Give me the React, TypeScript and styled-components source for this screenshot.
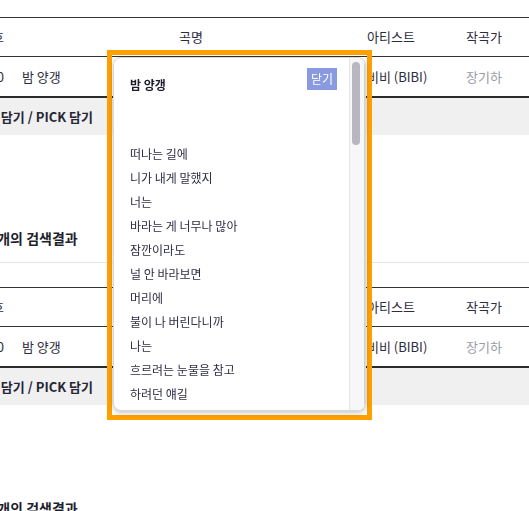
import * as React from 'react';
import styled, { createGlobalStyle } from 'styled-components';

const GlobalStyle = createGlobalStyle`
  html, body {
    margin: 0;
    padding: 0;
    background: #fff;
    overflow: hidden;
  }
  body {
    font-family: "Noto Sans CJK KR", "Noto Sans", sans-serif;
    color: #2c2c3e;
  }
`;

const Page = styled.main`
  width: 621px;
  margin: -43px 0 0 -60px;
`;

const Section = styled.section`
  margin-bottom: 92px;
`;

const Heading = styled.h2`
  margin: 0;
  padding: 0 0 13px 20px;
  font-size: 14px;
  font-weight: 700;
  line-height: 22px;
  color: #1f1f2e;
  border-bottom: 1px solid #e6e6e6;
`;

const Table = styled.div`
  margin-top: 24px;
  border-top: 1px solid #333;
`;

const Row = styled.div<{ $head?: boolean }>`
  display: grid;
  grid-template-columns: 72px 350px 99px 100px;
  align-items: center;
  height: ${(p) => (p.$head ? 38 : 39)}px;
  border-bottom: ${(p) => (p.$head ? '1px solid #333' : '2px solid #2b2b2b')};
  font-size: 13px;
  line-height: 20px;
`;

const NoCell = styled.div`
  text-align: right;
  padding-right: 8px;
  white-space: nowrap;
`;

const TitleCell = styled.div<{ $head?: boolean }>`
  text-align: ${(p) => (p.$head ? 'center' : 'left')};
  padding-left: ${(p) => (p.$head ? 8 : 10)}px;
  white-space: nowrap;
`;

const TextCell = styled.div<{ $muted?: boolean }>`
  padding-left: 5px;
  white-space: nowrap;
  color: ${(p) => (p.$muted ? '#9a9aa4' : 'inherit')};
`;

const ActionBar = styled.div`
  display: flex;
  align-items: center;
  height: 37px;
  padding-left: 34px;
  background: #f0f0f0;
  font-size: 13px;
  font-weight: 700;
  color: #262636;
  white-space: nowrap;
`;

// overlay ---------------------------------------------------------------

const Highlight = styled.div`
  position: fixed;
  left: 107px;
  top: 50px;
  width: 265px;
  height: 370px;
  box-sizing: border-box;
  border: 5px solid #ffa000;
  padding: 2px 1px 4px 1px;
`;

const Popup = styled.div`
  box-sizing: border-box;
  display: flex;
  width: 100%;
  height: 100%;
  background: #fff;
  border: 1px solid #d8d8d8;
  border-radius: 8px;
  box-shadow: 0 2px 5px rgba(0, 0, 0, 0.22);
  overflow: hidden;
`;

const Scroller = styled.div`
  flex: 1;
  min-width: 0;
  overflow: hidden;
`;

const ScrollTrack = styled.div`
  box-sizing: border-box;
  width: 16px;
  flex-shrink: 0;
  padding: 4px 0 0 2px;
  background: #f7f7f7;
  border-left: 1px solid #e4e4e4;
  border-right: 1px solid #d2d2d2;
`;

const ScrollThumb = styled.div`
  width: 8px;
  height: 83px;
  border-radius: 4px;
  background: #b7b7bf;
`;

const PopupHead = styled.div`
  display: flex;
  justify-content: space-between;
  align-items: flex-start;
  padding: 10px 12px 0 16px;
`;

const PopupTitle = styled.h3`
  margin: 0;
  padding-top: 7px;
  font-size: 12px;
  line-height: 20px;
  font-weight: 700;
  color: #1c1c2c;
`;

const CloseButton = styled.button`
  height: 22px;
  padding: 0 4px;
  border: none;
  background: #8a9ae0;
  color: #fff;
  font-family: inherit;
  font-size: 12px;
  line-height: 22px;
  cursor: pointer;
`;

const Lyrics = styled.div`
  margin-top: 47px;
  padding: 0 12px 30px 16px;
  font-size: 12px;
  line-height: 24px;
  color: #2e2e44;
`;

const LyricLine = styled.div`
  min-height: 24px;
  white-space: nowrap;
`;

const lyrics = [
  '떠나는 길에',
  '니가 내게 말했지',
  '너는',
  '바라는 게 너무나 많아',
  '잠깐이라도',
  '널 안 바라보면',
  '머리에',
  '불이 나 버린다니까',
  '나는',
  '흐르려는 눈물을 참고',
  '하려던 얘길',
  '어렵게 누르고',
  '그래 미안해라는',
  '한 마디로',
  '투정 대신에',
  '다른 말을 지어내',
  '',
  '아냐 내가',
  '늘 바란 건',
  '하나야',
  '한 개뿐이야',
  '달디단 밤양갱',
  '',
  '달디달고',
  '달디달고',
  '달디단 밤양갱 밤양갱',
  '내가 늘 바란 건',
  '하나야',
  '한 개뿐이야',
  '달디단 밤양갱',
];

function ResultSection({ heading }: { heading: string }) {
  return (
    <Section>
      <Heading>{heading}</Heading>
      <Table>
        <Row $head>
          <NoCell>번호</NoCell>
          <TitleCell $head>곡명</TitleCell>
          <TextCell>아티스트</TextCell>
          <TextCell>작곡가</TextCell>
        </Row>
        <Row>
          <NoCell>10</NoCell>
          <TitleCell>밤 양갱</TitleCell>
          <TextCell>비비 (BIBI)</TextCell>
          <TextCell $muted>장기하</TextCell>
        </Row>
        <ActionBar>전체 담기 / PICK 담기</ActionBar>
      </Table>
    </Section>
  );
}

export default function App() {
  return (
    <>
      <GlobalStyle />
      <Page>
        <ResultSection heading="곡명 1개의 검색결과" />
        <ResultSection heading="가사 1개의 검색결과" />
        <ResultSection heading="앨범 1개의 검색결과" />
      </Page>
      <Highlight>
        <Popup>
          <Scroller>
            <PopupHead>
              <PopupTitle>밤 양갱</PopupTitle>
              <CloseButton type="button">닫기</CloseButton>
            </PopupHead>
            <Lyrics>
              {lyrics.map((line, i) => (
                <LyricLine key={i}>{line}</LyricLine>
              ))}
            </Lyrics>
          </Scroller>
          <ScrollTrack>
            <ScrollThumb />
          </ScrollTrack>
        </Popup>
      </Highlight>
    </>
  );
}
